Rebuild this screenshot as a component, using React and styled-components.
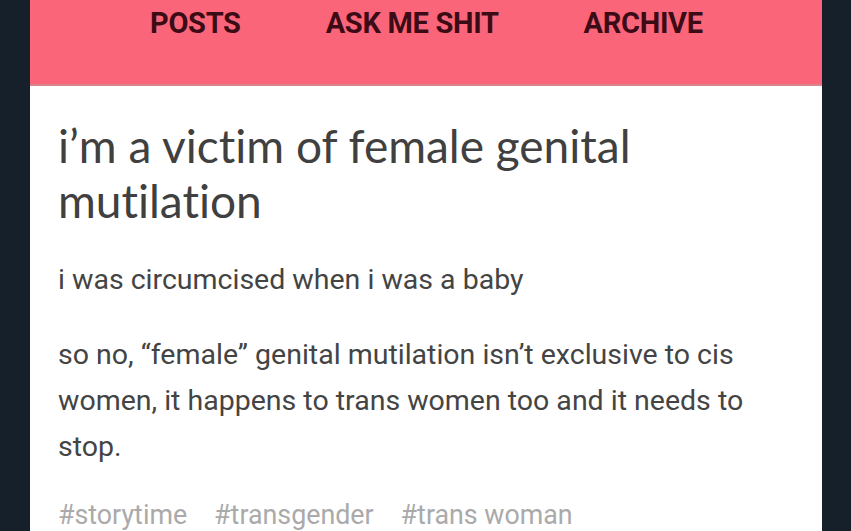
import styled, { createGlobalStyle } from 'styled-components';

const Global = createGlobalStyle`
	html, body {
		margin: 0;
		padding: 0;
		background: #16202b;
		overflow: hidden;
	}
`;

export default function App() {
	return (
		<>
			<Global />
			<Page>
				<Card>
					<Nav>
						<NavLink>POSTS</NavLink>
						<NavLink>ASK ME SHIT</NavLink>
						<NavLink>ARCHIVE</NavLink>
					</Nav>
					<Body>
						<Title>i’m a victim of female genital mutilation</Title>
						<Para>i was circumcised when i was a baby</Para>
						<Para>
							so no, “female” genital mutilation isn’t exclusive to cis women, it happens to trans women
							too and it needs to stop.
						</Para>
						<Tags>
							<Tag>#storytime</Tag>
							<Tag>#transgender</Tag>
							<Tag>#trans woman</Tag>
						</Tags>
					</Body>
				</Card>
			</Page>
		</>
	);
}

const Page = styled.div`
	width: 851px;
	height: 531px;
	padding: 0 29px 0 30px;
	box-sizing: border-box;
`;

const Card = styled.div`
	background: #ffffff;
	height: 100%;
`;

const Nav = styled.nav`
	height: 86px;
	background: #fb6579;
	border-bottom: 2px solid #d9838d;
	box-sizing: border-box;
	display: flex;
	align-items: flex-start;
	padding: 6px 0 0 120px;
	gap: 85px;
`;

const NavLink = styled.span`
	font-family: Roboto, 'Liberation Sans', sans-serif;
	font-weight: 700;
	font-size: 29px;
	color: #3b0b16;
	letter-spacing: -0.3px;
`;

const Body = styled.div`
	padding: 32px 28px 0 28px;
`;

const Title = styled.h1`
	margin: 0 0 29px;
	font-family: Lato, 'Open Sans', sans-serif;
	font-variant-ligatures: none;
	font-weight: 400;
	font-size: 46px;
	line-height: 55px;
	color: #404040;
	width: 640px;
`;

const Para = styled.p`
	margin: 0 0 29px;
	font-family: Roboto, 'Liberation Sans', sans-serif;
	font-size: 28.5px;
	line-height: 46px;
	color: #444444;
	width: 705px;
`;

const Tags = styled.div`
	display: flex;
	gap: 27px;
	margin-top: 2px;
`;

const Tag = styled.span`
	font-family: Roboto, 'Liberation Sans', sans-serif;
	font-size: 26.8px;
	color: #aaaaaa;
`;
